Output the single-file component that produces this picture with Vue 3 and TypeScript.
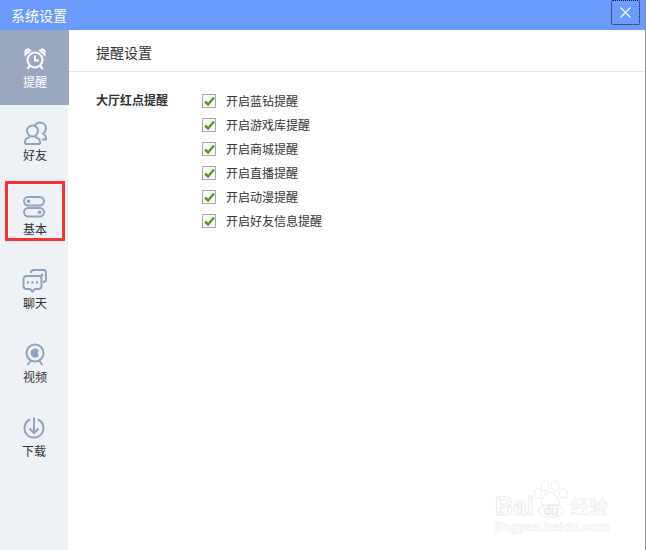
<script setup lang="ts">
interface NavItem { label: string; icon: string }
const nav: NavItem[] = [
  { label: '提醒', icon: 'clock' },
  { label: '好友', icon: 'friends' },
  { label: '基本', icon: 'basic' },
  { label: '聊天', icon: 'chat' },
  { label: '视频', icon: 'cam' },
  { label: '下载', icon: 'down' },
]
const options: string[] = ['开启蓝钻提醒', '开启游戏库提醒', '开启商城提醒', '开启直播提醒', '开启动漫提醒', '开启好友信息提醒']
</script>

<template>
  <div class="win">
    <header class="titlebar">
      <span class="title">系统设置</span>
      <button class="close" aria-label="关闭">
        <svg width="11" height="11" viewBox="0 0 11 11"><path d="M.5.5 10.500 10.500M10.500.5 .5 10.500" stroke="#fff" stroke-width="1.100" fill="none" /></svg>
      </button>
    </header>
    <div class="body">
      <aside class="side">
        <div v-for="(n, i) in nav" :key="n.label" class="item" :class="{ active: i === 0 }">
          <svg class="ico" width="26" height="26" viewBox="0 -1 26 26" fill="none" stroke="currentColor" stroke-width="2">
            <template v-if="n.icon === 'clock'">
              <circle cx="13" cy="14" r="7.500" />
              <path d="M13 9.500v5h4M3.500 8.500 8 4.500 5.500 3.200 3.500 5zM22.500 8.500 18 4.500l2.500-1.300 2 1.800zM7.500 20l-2 3M18.500 20l2 3" />
            </template>
            <template v-else-if="n.icon === 'friends'">
              <circle cx="10.500" cy="11" r="5.500" />
              <path d="M3 24v-2c0-3 3-4.500 5-5M18 24v-2c0-3-3-4.500-5-5M3 24h15M13 5.500c1-2 3-3 5-3 3.500 0 6 2.500 6 5.500 0 2.500-1 4-3 5.500 1.500 1 3 2 3 4.500v1.500h-4" />
            </template>
            <template v-else-if="n.icon === 'basic'">
              <rect x="2" y="3" width="20" height="8.500" rx="4.250" />
              <rect x="2" y="14" width="20" height="8.500" rx="4.250" />
              <circle cx="6.500" cy="7.200" r="1.800" fill="currentColor" stroke="none" />
              <circle cx="17.500" cy="18.300" r="1.800" fill="currentColor" stroke="none" />
            </template>
            <template v-else-if="n.icon === 'chat'">
              <path d="M4.500 8h12a3 3 0 0 1 3 3v7a3 3 0 0 1-3 3h-3.500l-2.500 2.500L8 21H4.500a3 3 0 0 1-3-3v-7a3 3 0 0 1 3-3z" />
              <path d="M9 5V4.500C9 3 10 2 11.500 2h10C23 2 24 3 24 4.500v7c0 1.500-1 2.500-3 2.500" />
              <circle cx="6" cy="14.500" r="1.200" fill="currentColor" stroke="none" />
              <circle cx="10.500" cy="14.500" r="1.200" fill="currentColor" stroke="none" />
              <circle cx="15" cy="14.500" r="1.200" fill="currentColor" stroke="none" />
              <circle cx="20" cy="7" r="1.500" fill="currentColor" stroke="none" />
            </template>
            <template v-else-if="n.icon === 'cam'">
              <circle cx="13" cy="11" r="8.500" />
              <path d="M13 6.500a4.500 4.500 0 1 0 4 6.800 2.800 2.800 0 0 1 0-4.600 4.500 4.500 0 0 0-4-2.200z" fill="currentColor" stroke="none" />
              <path d="M8.500 19 5.500 23M17.500 19l3 4" />
            </template>
            <template v-else>
              <path d="M9 3.500a9.500 9.500 0 1 0 8 0" />
              <path d="M13 1.500V17M8.500 12.500 13 17l4.500-4.500" />
            </template>
          </svg>
          <span class="lab">{{ n.label }}</span>
          <span v-if="n.icon === 'basic'" class="redbox"></span>
        </div>
      </aside>
      <main class="main">
        <h2 class="head">提醒设置</h2>
        <section class="group">
          <div class="gname">大厅红点提醒</div>
          <ul class="opts">
            <li v-for="o in options" :key="o" class="opt">
              <span class="cb">
                <svg width="11" height="10" viewBox="0 0 11 10"><path d="M1 5.500 4 8.500 10 1.500" fill="none" stroke="#5aa02c" stroke-width="2.600" /></svg>
              </span>
              <span>{{ o }}</span>
            </li>
          </ul>
        </section>
      </main>
    </div>
    <div class="mark">
      <svg class="paw" width="36" height="30" viewBox="0 0 44 36" fill="#fff" stroke="#ececec" stroke-width="1.300">
        <ellipse cx="15" cy="7" rx="4.500" ry="6" />
        <ellipse cx="27" cy="7" rx="4.500" ry="6" />
        <ellipse cx="6" cy="16" rx="4.500" ry="6" />
        <ellipse cx="37" cy="16" rx="4.500" ry="6" />
        <path d="M21 14c4 0 6 4 9 7 3 3 3 10-3 10H15c-6 0-6-7-3-10 3-3 5-7 9-7z" />
      </svg>
      <div class="mrow">
        <span class="bai">Bai</span><span class="du">du</span><span class="jy">经验</span>
      </div>
      <div class="url">jingyan.baidu.com</div>
    </div>
  </div>
</template>

<style>
html, body { margin: 0; background: #fff; }
</style>

<style scoped>
.win {
  position: relative;
  width: 646px;
  height: 550px;
  box-sizing: border-box;
  border-right: 1px solid #8f8f8f;
  display: flex;
  flex-direction: column;
  overflow: hidden;
  background: #fff;
  font-family: "Noto Sans CJK SC", "Liberation Sans", sans-serif;
  font-size: 12px;
  color: #333;
}
.titlebar {
  height: 30px;
  flex: none;
  background: #6b9bfd;
  display: flex;
  align-items: center;
  justify-content: space-between;
  padding: 0 5px 0 11px;
  color: #fff;
}
.title { font-size: 14px; }
.close {
  width: 29px;
  height: 25px;
  margin-top: -5px;
  box-sizing: border-box;
  background: transparent;
  border: 1px dotted #111;
  border-radius: 2px;
  padding: 0;
  display: flex;
  align-items: center;
  justify-content: center;
}
.body { flex: 1; display: flex; min-height: 0; }
.side { width: 68px; flex: none; background: #eef2f6; display: flex; flex-direction: column; }
.item {
  position: relative;
  height: 74px;
  flex: none;
  display: flex;
  flex-direction: column;
  align-items: center;
  padding: 14px 0 0 2px;
  box-sizing: border-box;
  color: #8fa2bf;
}
.item.active { background: #9aa8bf; color: #fff; width: 69px; height: 75px; padding: 15px 0 0 1px; }
.item:last-child { padding-left: 0; }
.ico { display: block; height: 26px; }
.lab { color: #333; line-height: 16px; margin-top: 2px; }
.active .lab { color: #fff; margin-top: 3px; }
.redbox {
  position: absolute;
  left: 5px;
  top: 2px;
  width: 60px;
  height: 60px;
  box-sizing: border-box;
  border: 3px solid #fb3232;
}
.main { flex: 1; min-width: 0; }
.head {
  margin: 0;
  height: 42px;
  box-sizing: border-box;
  border-bottom: 1px solid #e4e4e4;
  padding: 14px 0 0 28px;
  font-size: 14px;
  font-weight: 400;
  line-height: 17px;
}
.group { display: flex; padding: 16px 0 0 28px; }
.gname { width: 106px; font-weight: 700; line-height: 20px; padding-top: 2px; }
.opts { list-style: none; margin: 0; padding: 0; }
.opt { height: 24px; display: flex; align-items: center; gap: 10px; }
.cb {
  width: 14px;
  height: 14px;
  margin-top: 1px;
  box-sizing: border-box;
  border: 1px solid #a8a8a8;
  background: #fbfbfb;
  display: flex;
  align-items: center;
  justify-content: center;
}
.mark {
  position: absolute;
  left: 495px;
  top: 480px;
  width: 118px;
  height: 56px;
  color: #fff;
}
.paw { position: absolute; left: 38px; top: 0; }
.mrow {
  position: absolute;
  left: 0;
  top: 13px;
  height: 26px;
  display: flex;
  align-items: center;
  -webkit-text-stroke: 1px #ececec;
  font-family: "Liberation Sans", sans-serif;
}
.bai { font-size: 25px; font-weight: 700; width: 43px; line-height: 26px; }
.du {
  width: 26px;
  height: 14px;
  margin-top: 9px;
  font-size: 13px;
  line-height: 12px;
  text-align: center;
  box-sizing: border-box;
  border: 1px solid #ececec;
  border-radius: 50%;
  -webkit-text-stroke: .6px #e4e4e4;
}
.jy {
  font-size: 19px;
  line-height: 26px;
  margin-left: 6px;
  font-family: "Noto Sans CJK SC", sans-serif;
  -webkit-text-stroke: .6px #ececec;
}
.url {
  position: absolute;
  left: 0;
  top: 40px;
  line-height: 14px;
  font-family: "Liberation Sans", sans-serif;
  font-size: 13px;
  font-weight: 700;
  -webkit-text-stroke: .6px #ececec;
}
</style>
